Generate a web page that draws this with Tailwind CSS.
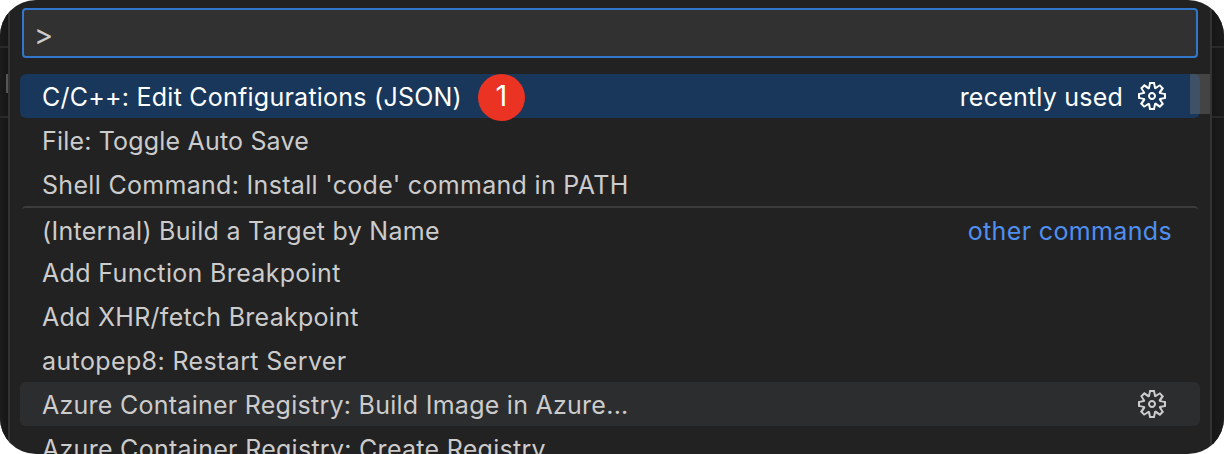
<!DOCTYPE html>
<html lang="en">
<head>
<meta charset="utf-8">
<title>Command Palette</title>
<script src="https://cdn.jsdelivr.net/npm/@tailwindcss/browser@4"></script>
</head>
<body class="bg-white">
<svg class="hidden">
  <symbol id="gear" viewBox="0 0 16 16"><path fill="currentColor" fill-rule="evenodd" d="M9.1 4.4L8.6 2H7.4l-.5 2.4-.7.3-2-1.3-.9.8 1.3 2-.2.7-2.4.5v1.2l2.4.5.3.8-1.3 2 .8.8 2-1.3.8.3.4 2.3h1.2l.5-2.4.8-.3 2 1.3.8-.8-1.3-2 .3-.8 2.3-.4V7.4l-2.4-.5-.3-.8 1.3-2-.8-.8-2 1.3-.7-.2zM9.4 1l.5 2.4L12 2.1l2 2-1.4 2.1 2.4.4v2.8l-2.4.5L14 12l-2 2-2.1-1.4-.5 2.4H6.6l-.5-2.4L4 13.9l-2-2 1.4-2.1L1 9.4V6.6l2.4-.5L2.1 4l2-2 2.1 1.4.4-2.4h2.8zm.6 7c0 1.1-.9 2-2 2s-2-.9-2-2 .9-2 2-2 2 .9 2 2zM8 9c.6 0 1-.4 1-1s-.4-1-1-1-1 .4-1 1 .4 1 1 1z"/></symbol>
</svg>
<div class="relative flex h-[454px] w-[1224px] overflow-hidden rounded-[36px] bg-[#222222] font-['Inter',sans-serif] text-[25px] whitespace-nowrap text-[#cccccc]">
  <div class="flex w-2 shrink-0 flex-col bg-linear-to-r from-[#1c1c1c] to-[#161616]">
    <div class="h-12 border-b-2 border-[#292929]"></div>
    <div class="flex h-[70px] items-start justify-end border-b-2 border-[#292929] pt-[26px]"><div class="h-[19px] w-0.5 bg-[#555555]"></div></div>
  </div>
  <main class="w-[1204px] shrink-0 border-x-2 border-[#333333] px-2.5 pt-2">
    <div class="mx-0.5 flex h-[50px] items-center rounded-[4px] border-2 border-[#3277cc] bg-[#313131] pl-[10px]"><span class="mt-[3px] text-[29px]">&gt;</span></div>
    <div class="mt-4 flex h-11 items-center rounded-md bg-[#18375a] pr-8 pl-[22px] text-white">
      <span class="mt-1 tracking-[0.24px]">C/C++: Edit Configurations (JSON)</span>
      <span class="mt-[3px] ml-4 flex size-[47px] shrink-0 items-center justify-center rounded-full bg-[#ea3323] pb-1 text-[29px]">1</span>
      <span class="mt-1 mr-[13px] ml-auto tracking-[0.22px]">recently used</span>
      <svg class="size-8"><use href="#gear"/></svg>
    </div>
    <div class="flex h-11 items-center pl-[22px]"><span class="mt-1 tracking-[0.18px]">File: Toggle Auto Save</span></div>
    <div class="flex h-11 items-center pl-[22px]"><span class="mt-1 tracking-[0.31px]">Shell Command: Install 'code' command in PATH</span></div>
    <div class="mx-0.5 flex h-11 items-center justify-between rounded-sm border-t-2 border-[#3c3c3c] pr-[26px] pl-5"><span class="mt-1.5 tracking-[0.29px]">(Internal) Build a Target by Name</span><span class="mt-1.5 tracking-[0.35px] text-[#4e8ff0]">other commands</span></div>
    <div class="flex h-11 items-center pl-[22px]"><span class="mt-1 tracking-[0.34px]">Add Function Breakpoint</span></div>
    <div class="flex h-11 items-center pl-[22px]"><span class="mt-1 tracking-[0.28px]">Add XHR/fetch Breakpoint</span></div>
    <div class="flex h-11 items-center pl-[22px]"><span class="mt-1 tracking-[0.38px]">autopep8: Restart Server</span></div>
    <div class="flex h-11 items-center justify-between rounded-md bg-[#2c2d2f] pr-8 pl-[22px]"><span class="mt-1 tracking-[0.26px]">Azure Container Registry: Build Image in Azure...</span><svg class="size-8"><use href="#gear"/></svg></div>
    <div class="flex h-11 items-center pl-[22px]"><span class="mt-1 tracking-[0.28px]">Azure Container Registry: Create Registry</span></div>
  </main>
  <div class="w-3 shrink-0 bg-linear-to-r from-[#161616] to-[#1c1c1c]">
    <div class="h-12 border-b-2 border-[#292929]"></div>
    <div class="h-[70px] border-b-2 border-[#292929]"></div>
  </div>
  <div class="absolute top-[74px] left-[1190px] h-10 w-5 bg-[#797979]/40"></div>
</div>
</body>
</html>
